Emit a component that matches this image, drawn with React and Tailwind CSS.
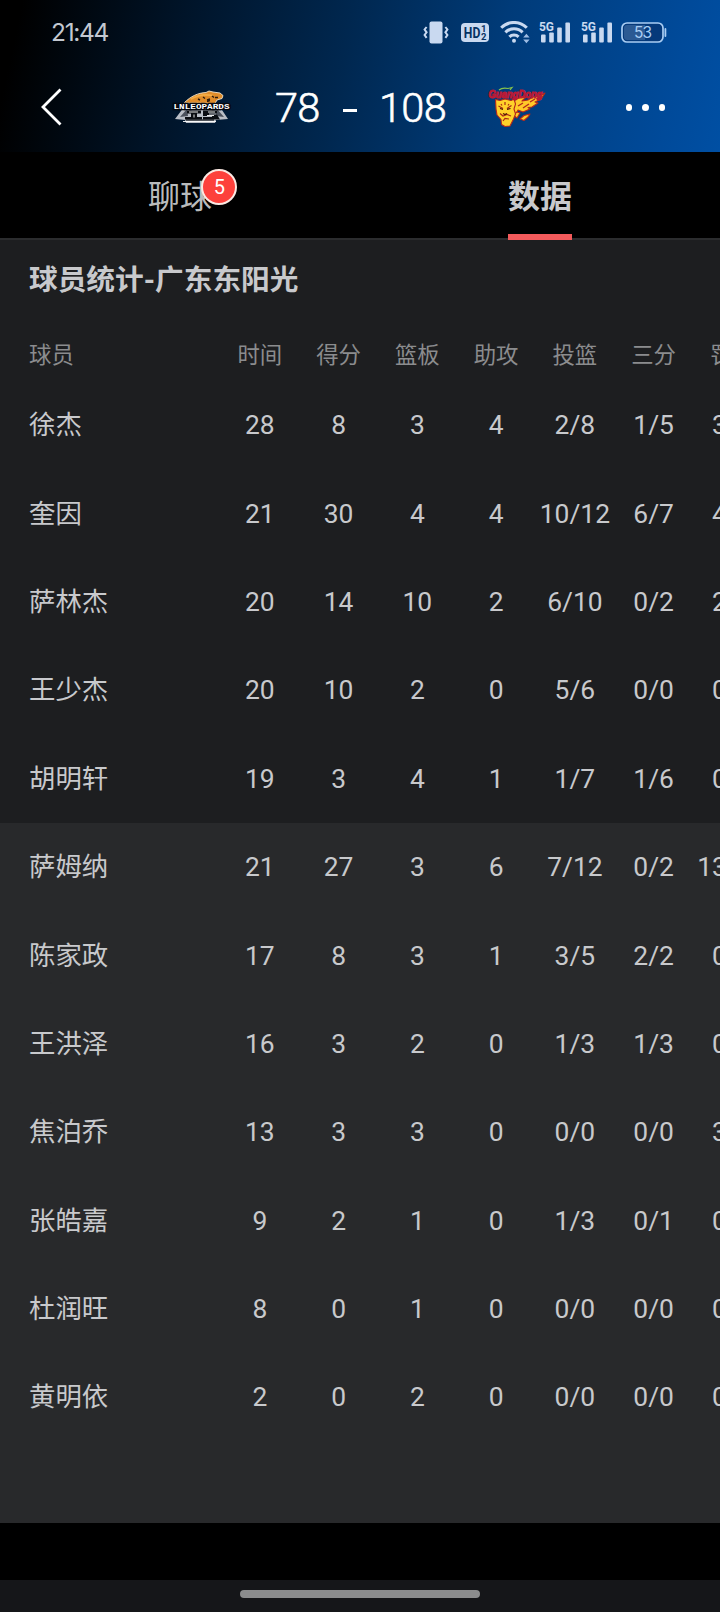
import React from "react";

const columns = ["时间", "得分", "篮板", "助攻", "投篮", "三分", "罚球"];

const starters = [
  { name: "徐杰", stats: ["28", "8", "3", "4", "2/8", "1/5", "3/4"] },
  { name: "奎因", stats: ["21", "30", "4", "4", "10/12", "6/7", "4/4"] },
  { name: "萨林杰", stats: ["20", "14", "10", "2", "6/10", "0/2", "2/2"] },
  { name: "王少杰", stats: ["20", "10", "2", "0", "5/6", "0/0", "0/0"] },
  { name: "胡明轩", stats: ["19", "3", "4", "1", "1/7", "1/6", "0/0"] },
];

const bench = [
  { name: "萨姆纳", stats: ["21", "27", "3", "6", "7/12", "0/2", "13/14"] },
  { name: "陈家政", stats: ["17", "8", "3", "1", "3/5", "2/2", "0/0"] },
  { name: "王洪泽", stats: ["16", "3", "2", "0", "1/3", "1/3", "0/0"] },
  { name: "焦泊乔", stats: ["13", "3", "3", "0", "0/0", "0/0", "3/4"] },
  { name: "张皓嘉", stats: ["9", "2", "1", "0", "1/3", "0/1", "0/0"] },
  { name: "杜润旺", stats: ["8", "0", "1", "0", "0/0", "0/0", "0/0"] },
  { name: "黄明依", stats: ["2", "0", "2", "0", "0/0", "0/0", "0/0"] },
];

function Signal() {
  return (
    <svg width="32" height="24" viewBox="0 0 32 24" fill="#c9d9f0">
      <text x="0" y="10.2" fontSize="12.5" fontWeight="700" textLength="15" lengthAdjust="spacingAndGlyphs" fontFamily="Roboto, sans-serif">5G</text>
      <rect x="2" y="13.5" width="4.6" height="8" rx="1" />
      <rect x="10.2" y="11.5" width="4.6" height="10" rx="1" />
      <rect x="18.2" y="6.5" width="4.6" height="15" rx="1" />
      <rect x="26.4" y="1.5" width="4.6" height="20" rx="1" />
    </svg>
  );
}

function StatusBar() {
  return (
    <div className="flex h-16 items-center justify-between pt-[1px] pl-[51px] pr-[53px]">
      <span className="text-[24.5px] leading-none tracking-[-1.3px] text-[#c3c8d1] font-['Inter',sans-serif]">
        21:44
      </span>

      <div className="flex items-center">
        {/* vibrate */}
        <svg width="26" height="24" viewBox="0 0 26 24" fill="none" stroke="#c9d9f0" strokeWidth="2">
          <rect x="6.5" y="0.5" width="13" height="22" rx="2" fill="#c9d9f0" stroke="none" />
          <path d="M3.6 6 1.6 8.5l2 2.8-2 2.7 2 2.8M22.4 6l2 2.5-2 2.8 2 2.7-2 2.8" />
        </svg>

        {/* HD */}
        <svg className="ml-[12px]" width="28" height="24" viewBox="0 0 28 24">
          <rect x="0" y="2" width="28" height="19" rx="4" fill="#c9d9f0" />
          <g fill="#063263" fontFamily="Roboto, sans-serif" fontWeight="700">
            <text x="2.8" y="16.8" fontSize="14.5" textLength="16.5" lengthAdjust="spacingAndGlyphs">HD</text>
            <text x="20" y="10.8" fontSize="9.5">1</text>
            <text x="20" y="19.4" fontSize="9.5">2</text>
          </g>
        </svg>

        {/* wifi */}
        <svg className="ml-[11px]" width="30" height="24" viewBox="0 0 30 24" fill="none" stroke="#c9d9f0" strokeWidth="3">
          <path d="M1.2 6.8a18 18 0 0 1 25.6 0" />
          <path d="M5.4 11.4a12 12 0 0 1 17.2 0" />
          <path d="M9.4 15.8a6.6 6.6 0 0 1 9.2 0" />
          <circle cx="14" cy="19.8" r="2" fill="#c9d9f0" stroke="none" />
          <path d="m23.2 16.5 3.2-3.8 3.2 3.8zM23.2 18.5h6.4l-3.2 3.8z" fill="#9dbce3" stroke="none" />
        </svg>

        <div className="ml-[9px] flex gap-[10px]">
          <Signal />
          <Signal />
        </div>

        {/* battery */}
        <svg className="ml-[8px]" width="46" height="24" viewBox="0 0 46 24">
          <rect x="1" y="2" width="41" height="19" rx="5" fill="#05397a" stroke="#a9cdf3" strokeWidth="1.7" />
          <path d="M6 4h18v15H6a3 3 0 0 1-3-3V7a3 3 0 0 1 3-3z" fill="#2b5a93" />
          <path d="M44.4 8v7" stroke="#a9cdf3" strokeWidth="1.8" strokeLinecap="round" />
          <text x="21.7" y="17.2" fontSize="15.5" fill="#a9cdf3" textAnchor="middle" fontFamily="Inter, sans-serif" letterSpacing="-0.8">53</text>
        </svg>
      </div>
    </div>
  );
}

function LeopardsLogo() {
  return (
    <svg width="60" height="36" viewBox="0 0 60 36">
      <path d="M3 30 12 18h36l8 12-12 1-1 3H14l-1-3z" fill="#b9bec6" />
      <path d="m8 28 7-8 1 7zM52 28l-7-8-1 7z" fill="#4b515c" />
      <path d="M12 14C19 7 26 4 34 3.5l3-1.5 4 1 7 1 3 2.5-1 3-5 1.5-2 3.5z" fill="#df8c2a" stroke="#eee3cd" strokeWidth=".9" />
      <path d="M19 10c7-4 14-5 22-3.5" fill="none" stroke="#f5ad45" strokeWidth="1.6" />
      <path d="m26 10 2 1m3-3 2 1.5m2 1.5 3-1m2-3 2 1.5m-7 4 3-1m5-3h3" stroke="#2c1a0c" strokeWidth="1.4" />
      <text x="1.5" y="19.5" fontSize="7.5" fontWeight="700" textLength="56" lengthAdjust="spacingAndGlyphs" fill="#fff" stroke="#05080e" strokeWidth="2.6" paintOrder="stroke" fontFamily="'Liberation Mono', monospace">LNLEOPARDS</text>
      <path d="M15 21.5h14v3h-4V28h5v2.5H13V28h6v-3.5h-4zM31 21.5h14v3h-8v1h8l3 5H31V28h9v-1h-9z" fill="#0a0d12" />
      <path d="M17 23h9M36 23h7M22 25.5v3M35 26.5h7M11 32.5h33" stroke="#fff" strokeWidth=".9" />
      <path d="M14 31h28" stroke="#0a0d12" strokeWidth="1.2" />
    </svg>
  );
}

function GuangdongLogo() {
  return (
    <svg width="62" height="42" viewBox="0 0 62 42">
      <path d="M12 4c3-2.5 6-2 9-1.5l4-1-2 2.500" fill="none" stroke="#86c44c" strokeWidth="1.2" />
      {/* flames */}
      <g fill="#ffc928" stroke="#b5281c" strokeWidth="1.1" strokeLinejoin="round">
        <path d="m26 15 7-3.5 6-.5-4 4 6-1 5-3 6-1 6-3-4 6-6 3 3 1-6 4-4 .5 2 1.5-7 3-5-2-2 4-4 1z" />
        <path d="m33 33 4-3.500 6-1.500-2 3-4 3.500zM26 29l4-3 3 1-3 5z" />
      </g>
      <path d="m31 20 5-3m0 5 6-4m1-2 5-3" fill="none" stroke="#b5281c" strokeWidth="1.4" />
      {/* leopard head */}
      <path d="m8.5 13.500 4.500 1 5-1.500 6 1.500 3-1.500 1.500 5-1.500 5 1.500 5-2 5-3.500 7-5 .500-3.500-2-.500-5-4-4.500-1-6z" fill="#ffd22a" stroke="#b5281c" strokeWidth="1.1" strokeLinejoin="round" />
      <path d="m11.500 20 4.500 2.500m8.500-3-4.500 3m-7 5 3 2.500 4-1.500 4 1.500m-8 5 2-2.500 4 .5M18 16v3m-4-1 1 1.500m7-1.500-1 1.500" fill="none" stroke="#a82a17" strokeWidth="1.2" />
      <path d="m13 22.500 3 .8m7.500-.8-3.500.8m-4 4.200 2 1 2-1" fill="none" stroke="#4b1208" strokeWidth="1.200" />
      <text x="1.5" y="11.500" fontSize="10" fontWeight="700" fontStyle="italic" textLength="54" lengthAdjust="spacingAndGlyphs" fill="#cf1f3c" stroke="#b81a36" strokeWidth="1.1" fontFamily="'Liberation Sans', sans-serif">GuangDong</text>
    </svg>
  );
}

function ScoreBar() {
  return (
    <div className="flex h-[88px] items-center pl-[41px] pr-[55px] pb-[3px]">
      <svg width="22" height="38" viewBox="0 0 22 38" fill="none" stroke="#fff" strokeWidth="2.8">
        <path d="M19.5 1.5 2 19l17.5 17.5" />
      </svg>
      <div className="ml-[109px]">
        <LeopardsLogo />
      </div>
      <div className="ml-[43px] flex w-[171px] items-center pt-[2px] text-[41.5px] leading-none font-light text-white [-webkit-text-stroke:0.6px_#fff] font-['Roboto',sans-serif]">
        <span className="w-[68px] tracking-[-0.7px]">78</span>
        <span className="h-[3px] w-[14px] translate-y-[3px] bg-white" />
        <span className="ml-auto tracking-[-0.7px]">108</span>
      </div>
      <div className="ml-[41px]">
        <GuangdongLogo />
      </div>
      <div className="ml-auto flex gap-[10px] pt-[2px]">
        <span className="size-[6.500px] rounded-full bg-white" />
        <span className="size-[6.500px] rounded-full bg-white" />
        <span className="size-[6.500px] rounded-full bg-white" />
      </div>
    </div>
  );
}

function Tabs() {
  return (
    <div className="grid h-[88px] grid-cols-2 bg-[linear-gradient(#000_86px,#2b2c2e_86px)] text-[32px]">
      <div className="flex justify-center pt-[21px] text-[#b9bbbc]">
        <div className="relative h-12 leading-[48px]">
          聊球
          <span className="absolute -top-[4px] left-[53.5px] flex size-[36px] items-center justify-center rounded-full border-2 border-[#fbe9e3] bg-[#fd413c] text-[20px] leading-none text-white">
            5
          </span>
        </div>
      </div>
      <div className="flex flex-col items-center justify-between pt-[21px] font-bold text-[#c8c9cc]">
        <span className="h-12 leading-[48px]">数据</span>
        <span className="h-[6px] w-16 bg-[#f25a5b]" />
      </div>
    </div>
  );
}

function PlayerRow({ player }) {
  return (
    <div className="flex h-[88.35px] items-center pt-[2px] text-[26.4px] text-[#c8c9cc]">
      <div className="w-[191.5px] shrink-0">{player.name}</div>
      {player.stats.map((value, i) => (
        <div key={i} className="w-[78.75px] shrink-0 text-center">
          {value}
        </div>
      ))}
    </div>
  );
}

function App() {
  return (
    <div className="flex h-[1612px] w-[720px] flex-col overflow-hidden bg-black font-['Roboto','Noto_Sans_CJK_SC',sans-serif]">
      <header className="h-[152px] bg-[linear-gradient(102deg,#000_3%,#001429_25%,#00274f_47%,#003b79_68%,#004a9a_92%,#004fa3_100%)]">
        <StatusBar />
        <ScoreBar />
      </header>

      <Tabs />

      <div className="h-[583px] bg-[#1d1e20] pl-[29px]">
        <h2 className="flex h-[82px] items-center pb-[1px] text-[28.7px] font-bold text-[#c8c9cc]">
          球员统计-广东东阳光
        </h2>
        <div className="flex h-[59px] items-center pt-[9px] text-[22.4px] text-[#8b8c8e]">
          <div className="w-[191.5px] shrink-0">球员</div>
          {columns.map((label) => (
            <div key={label} className="w-[78.75px] shrink-0 text-center">
              {label}
            </div>
          ))}
        </div>
        {starters.map((player) => (
          <PlayerRow key={player.name} player={player} />
        ))}
      </div>

      <div className="h-[700px] bg-[#28292b] pl-[29px]">
        {bench.map((player) => (
          <PlayerRow key={player.name} player={player} />
        ))}
      </div>

      <div className="mt-auto flex h-8 justify-center bg-[#151619] pt-[10px]">
        <div className="h-2 w-60 rounded-full bg-[#8b8c8d]" />
      </div>
    </div>
  );
}

export default App;
